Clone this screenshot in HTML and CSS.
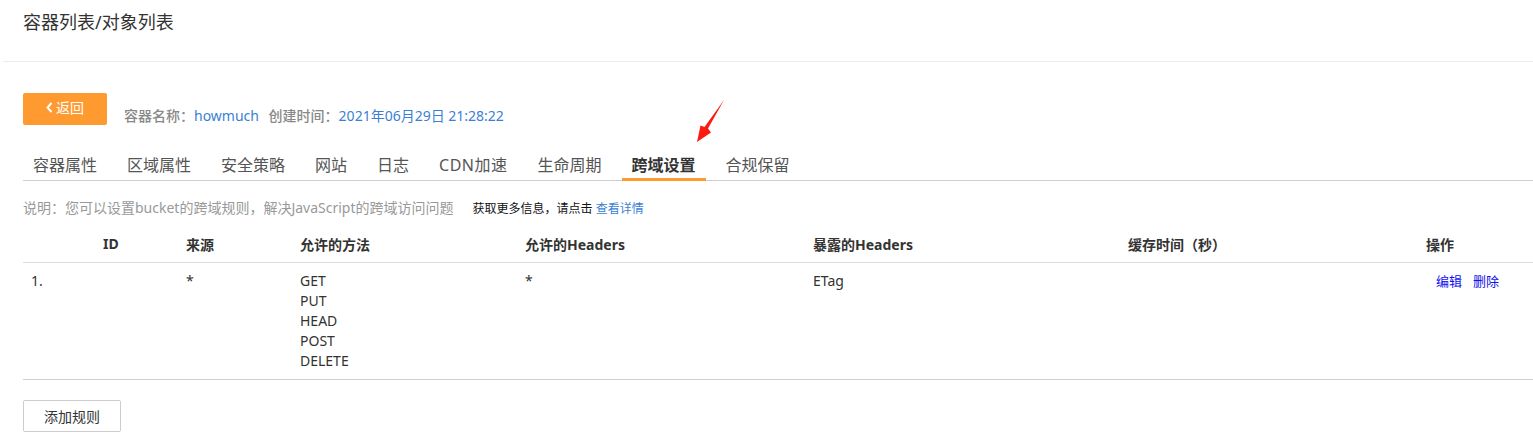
FILE: index.html
```html
<!DOCTYPE html>
<html lang="zh-CN">
<head>
<meta charset="utf-8">
<title>容器列表/对象列表</title>
<link rel="stylesheet" href="styles.css">
</head>
<body>
<div class="page">
  <header class="top">
    <h1 class="title">容器列表/对象列表</h1>
  </header>
  <main class="content">
    <div class="bar">
      <button class="back"><svg class="chev" width="7" height="11" viewBox="0 0 7 11" aria-hidden="true"><path d="M5.5 1 L1.5 5.5 L5.5 10" fill="none" stroke="#fff" stroke-width="2"/></svg>返回</button>
      <div class="info">
        <span class="label">容器名称：</span><span class="val">howmuch</span>
        <span class="label gap">创建时间：</span><span class="val">2021年06月29日 21:28:22</span>
      </div>
    </div>
    <nav class="tabs">
      <a class="tab">容器属性</a>
      <a class="tab">区域属性</a>
      <a class="tab">安全策略</a>
      <a class="tab">网站</a>
      <a class="tab">日志</a>
      <a class="tab cdn">CDN加速</a>
      <a class="tab">生命周期</a>
      <a class="tab active">跨域设置</a>
      <a class="tab">合规保留</a>
    </nav>
    <p class="desc">说明：您可以设置bucket的跨域规则，解决JavaScript的跨域访问问题<span class="more">获取更多信息，请点击 <a class="detail">查看详情</a></span></p>
    <div class="table">
      <div class="row head">
        <div class="cell id-h">ID</div>
        <div class="cell">来源</div>
        <div class="cell">允许的方法</div>
        <div class="cell">允许的Headers</div>
        <div class="cell">暴露的Headers</div>
        <div class="cell">缓存时间（秒）</div>
        <div class="cell">操作</div>
      </div>
      <div class="row body">
        <div class="cell">1.</div>
        <div class="cell">*</div>
        <div class="cell methods"><span>GET</span><span>PUT</span><span>HEAD</span><span>POST</span><span>DELETE</span></div>
        <div class="cell">*</div>
        <div class="cell">ETag</div>
        <div class="cell"></div>
        <div class="cell ops"><a class="op">编辑</a><a class="op">删除</a></div>
      </div>
    </div>
    <button class="add">添加规则</button>
  </main>
  <svg class="arrow" width="34" height="46" viewBox="0 0 34 46" aria-hidden="true">
    <polygon points="30,2 14,30.5 17,34.5 3,44 6.5,27.5 10.5,29" fill="#fb1a12"/>
  </svg>
</div>
</body>
</html>
```
FILE: styles.css
```css
* { box-sizing: border-box; }
html, body { margin: 0; padding: 0; background: #fff; }
body {
  font-family: "Noto Sans", "Noto Sans CJK SC", sans-serif;
  color: #333;
  width: 1533px;
  height: 443px;
  overflow: hidden;
}
.page { position: relative; }
.top {
  margin-left: 3px;
  height: 62px;
  border-bottom: 1px solid #ececec;
  padding: 9px 0 0 20px;
}
.title {
  margin: 0;
  font-size: 18px;
  font-weight: normal;
  line-height: 26px;
  color: #333;
}
.content { padding-left: 23px; }
.bar {
  display: flex;
  align-items: flex-end;
  margin-top: 31px;
  height: 32px;
}
.back {
  width: 84px;
  height: 32px;
  border: none;
  border-radius: 2px;
  background: #ff9a30;
  color: #fff;
  font-family: inherit;
  font-size: 14px;
  padding: 0 0 2px 0;
  line-height: 30px;
  display: flex;
  align-items: center;
  justify-content: center;
}
.chev { margin-right: 3px; margin-top: -1px; }
.info {
  margin-left: 17px;
  font-size: 14px;
  line-height: 20px;
  margin-bottom: -1px;
}
.label { color: #888; font-weight: 500; }
.label.gap { margin-left: 6px; }
.val { color: #3b7fd4; }
.tabs {
  display: flex;
  gap: 10px;
  margin-top: 21px;
  border-bottom: 1px solid #cfcfcf;
}
.tab {
  padding: 6px 10px 0;
  font-size: 16px;
  line-height: 26px;
  color: #555;
  border-bottom: 3px solid transparent;
  margin-bottom: -1px;
}
.tab.cdn { letter-spacing: 0.5px; }
.tab.active {
  color: #333;
  font-weight: bold;
  border-bottom-color: #ff9a30;
}
.desc {
  margin: 18px 0 0;
  font-size: 14px;
  line-height: 18px;
  color: #999;
}
.more {
  margin-left: 19px;
  color: #111;
  font-size: 12px;
}
.detail { color: #3b7fd4; }
.table { margin-top: 7px; }
.row {
  display: grid;
  grid-template-columns: 155px 114px 225px 288px 315px 298px 1fr;
}
.row.head {
  height: 38px;
  align-items: center;
  border-bottom: 1px solid #ddd;
  font-size: 14px;
  font-weight: bold;
  color: #333;
}
.row.body {
  border-bottom: 1px solid #cfcfcf;
  padding: 8px 0 8px;
  font-size: 14px;
  line-height: 20px;
  color: #333;
}
.cell { padding-left: 8px; }
.cell.id-h { padding-left: 80px; }
.methods { display: flex; flex-direction: column; }
.ops { padding-left: 18px; display: flex; gap: 11px; font-size: 13px; }
.op { color: #1010ee; }
.add {
  margin-top: 20px;
  width: 98px;
  height: 32px;
  border: 1px solid #ccc;
  border-radius: 2px;
  background: #fff;
  font-family: inherit;
  font-size: 14px;
  color: #333;
}
.arrow {
  position: absolute;
  left: 694px;
  top: 98px;
}
```
